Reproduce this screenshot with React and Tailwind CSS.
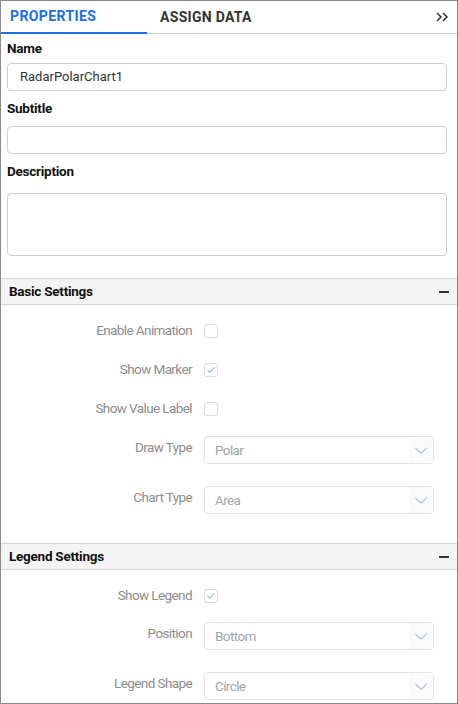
import { Check } from 'lucide-react'

const FONT = { fontFamily: 'Roboto, "Liberation Sans", sans-serif' }

function SectionHeader({ title }) {
  return (
    <div className="flex items-center justify-between h-[27px] bg-[#f4f4f4] border-y border-[#d4d4d4] pl-[8px] pr-[8px]">
      <span className="text-[13.5px] font-bold text-[#111] tracking-[-0.25px]">{title}</span>
      <span className="block w-[10px] h-[2px] bg-[#333]" />
    </div>
  )
}

function CheckRow({ label, checked }) {
  return (
    <div className="flex items-center h-[39px]">
      <div className="w-[191px] text-right text-[13.5px] tracking-[-0.6px] text-[#8d8d8d]">{label}</div>
      <div className="ml-[12px] w-[14px] h-[14px] rounded-[3px] border border-[#dcdcdc] flex items-center justify-center">
        {checked && <Check size={10} strokeWidth={2.5} className="text-[#8fb3f5]" />}
      </div>
    </div>
  )
}

function SelectRow({ label, value, className = '' }) {
  return (
    <div className={`flex items-center h-[28px] ${className}`}>
      <div className="w-[191px] text-right text-[13.5px] tracking-[-0.6px] text-[#8d8d8d] mb-[5px]">{label}</div>
      <div className="ml-[12px] w-[230px] h-[28px] rounded-[4px] border border-[#e2e2e2] flex items-center overflow-hidden">
        <span className="flex-1 pl-[10px] text-[13.5px] tracking-[-0.6px] text-[#a5a5a5]">{value}</span>
        <div className="w-[24px] h-full bg-[#fbfbfb] flex items-center justify-center">
          <svg width="12" height="7" viewBox="0 0 12 7" fill="none" stroke="#a9b6c9" strokeWidth="1.1">
            <path d="M0.5 0.8l5.5 5.5 5.5-5.5" />
          </svg>
        </div>
      </div>
    </div>
  )
}

export default function App() {
  return (
    <div style={FONT} className="w-[458px] h-[704px] border border-[#8a8a8a] bg-white overflow-hidden">
      {/* Tabs */}
      <div className="flex h-[33px] border-b border-[#cfcfcf]">
        <div className="w-[146px] pl-[9px] flex items-center border-b-2 border-[#1a6fe8] -mb-px">
          <span className="text-[14px] font-bold text-[#1a6fe8] tracking-[0.4px]">PROPERTIES</span>
        </div>
        <div className="pl-[13px] flex items-center flex-1">
          <span className="text-[14px] font-bold text-[#333] tracking-[0.3px]">ASSIGN DATA</span>
        </div>
        <div className="pr-[8px] flex items-center">
          <svg width="13" height="10" viewBox="0 0 13 10" fill="none" stroke="#333" strokeWidth="1.5">
            <path d="M1 1l4 4-4 4" />
            <path d="M7 1l4 4-4 4" />
          </svg>
        </div>
      </div>

      {/* General fields */}
      <div className="pl-[6px] pr-[10px] pt-[4px]">
        <div className="h-[20px] leading-[20px] text-[13.5px] tracking-[-0.25px] font-bold text-[#111]">Name</div>
        <div className="mt-[5px] h-[28px] rounded-[4px] border border-[#cfcfcf] flex items-center pl-[12px] text-[13px] text-[#333]">
          RadarPolarChart1
        </div>
        <div className="mt-[7px] h-[20px] leading-[20px] text-[13.5px] tracking-[-0.25px] font-bold text-[#111]">Subtitle</div>
        <div className="mt-[8px] h-[28px] rounded-[4px] border border-[#cfcfcf]" />
        <div className="mt-[7px] h-[20px] leading-[20px] text-[13.5px] tracking-[-0.25px] font-bold text-[#111]">Description</div>
        <div className="mt-[12px] h-[63px] rounded-[4px] border border-[#cfcfcf]" />
      </div>

      {/* Basic Settings */}
      <div className="mt-[22px]">
        <SectionHeader title="Basic Settings" />
        <div className="pt-[6px] pb-[29px]">
          <CheckRow label="Enable Animation" />
          <CheckRow label="Show Marker" checked />
          <CheckRow label="Show Value Label" />
          <SelectRow label="Draw Type" value="Polar" className="mt-[8px]" />
          <SelectRow label="Chart Type" value="Area" className="mt-[22px]" />
        </div>
      </div>

      {/* Legend Settings */}
      <div>
        <SectionHeader title="Legend Settings" />
        <div className="pt-[6px]">
          <CheckRow label="Show Legend" checked />
          <SelectRow label="Position" value="Bottom" className="mt-[7px]" />
          <SelectRow label="Legend Shape" value="Circle" className="mt-[22px]" />
        </div>
      </div>
    </div>
  )
}
